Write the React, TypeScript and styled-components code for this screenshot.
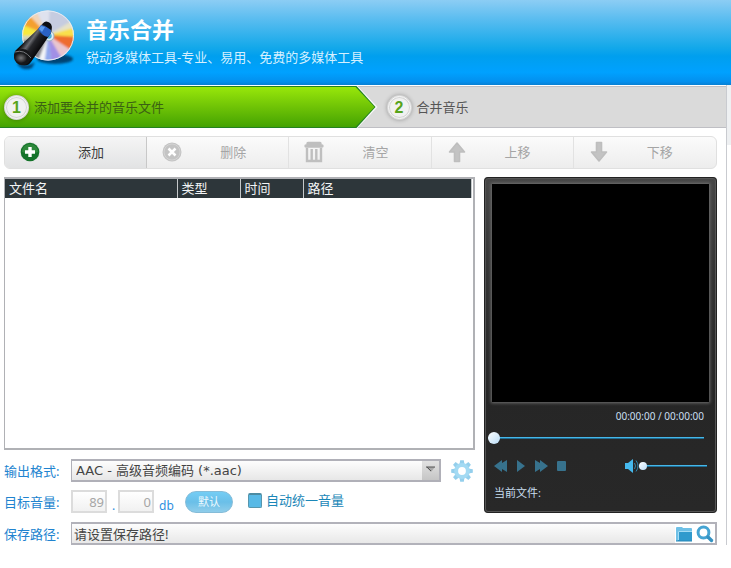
import React from "react";
import styled, { createGlobalStyle } from "styled-components";

const GlobalStyle = createGlobalStyle`
  *, *::before, *::after { box-sizing: border-box; }
  body {
    margin: 0;
    background: #fff;
    font-family: "Noto Sans", "Noto Sans CJK SC", sans-serif;
    font-size: 13px;
    line-height: 18px;
    color: #444;
  }
  button, input, select { font: inherit; color: inherit; margin: 0; padding: 0; border: 0; background: none; border-radius: 0; }
  input, select { min-width: 0; }
  svg { display: block; flex: none; }
`;

const Header = styled.header`
  display: flex;
  gap: 8px;
  height: 85px;
  padding: 8px 10px;
  background: linear-gradient(#8ccdf4 0%, #5bbdf0 22%, #15a9ea 55%, #009fee 66%, #00a1ff 85%, #0390ee 96%, #0780d4 100%);
`;

const Title = styled.h1`
  margin: 7px 0 6px;
  font-size: 22px;
  line-height: 28px;
  font-weight: 700;
  color: #fff;
`;

const Subtitle = styled.p`
  margin: 0;
  line-height: 16px;
  color: #d5f0ff;
  font-size: 13px;
`;

const Body = styled.div`
  display: flex;
  align-items: flex-start;
`;

const Rail = styled.div`
  flex: none;
  width: 4px;
  height: 60px;
  background: #eef0f2;
`;

const Main = styled.main`
  flex: 1;
  min-width: 0;
  padding-top: 1px;
  border-right: 1px solid #c9cbd0;
`;

const Steps = styled.ol`
  display: flex;
  margin: 0;
  padding: 0;
  list-style: none;
  background: #dadada;
  height: 42px;
  box-shadow: inset 0 1px #bfbfc4, inset 0 -1px #bfbfc4;
`;

const ActiveStep = styled.li`
  flex: 0 0 52%;
  padding-right: 2px;
  background: #fafafa;
  clip-path: polygon(0 0, calc(100% - 20px) 0, 100% 50%, calc(100% - 20px) 100%, 0 100%);
`;

const ActiveEdge = styled.div`
  height: 42px;
  padding: 1px 1px 1px 0;
  background: #248222;
  clip-path: polygon(0 0, calc(100% - 19px) 0, 100% 50%, calc(100% - 19px) 100%, 0 100%);
`;

const ActiveFill = styled.div`
  display: flex;
  align-items: center;
  gap: 5px;
  height: 40px;
  padding-left: 4px;
  color: #3b6113;
  background: linear-gradient(#98e70a, #6fc306 50%, #44a302);
  clip-path: polygon(0 0, calc(100% - 19px) 0, 100% 50%, calc(100% - 19px) 100%, 0 100%);
`;

const NextStep = styled.li`
  display: flex;
  align-items: center;
  gap: 5px;
  padding-left: 9px;
  color: #555;
`;

const StepNumber = styled.span`
  width: 25px;
  height: 25px;
  border: 3px solid #d6d6d6;
  border-radius: 50%;
  outline: 1px solid #f8f8f8;
  outline-offset: -2px;
  background: #f1f1f1;
  box-shadow: 0 0 4px rgba(0, 0, 0, 0.3);
  color: #57a31b;
  font: 700 16px/19px "Liberation Sans", sans-serif;
  text-align: center;
`;

const Content = styled.div`
  padding: 8px 9px 0 4px;
`;

const Toolbar = styled.div`
  display: grid;
  grid-template-columns: repeat(5, 1fr);
  height: 33px;
  border: 1px solid #e0e0e0;
  border-radius: 6px;
  overflow: hidden;
  background: linear-gradient(#fbfbfb, #ededed);
`;

const ToolButton = styled.button`
  display: flex;
  align-items: center;
  gap: 37px;
  padding: 0 0 1px 14px;
  color: #3c3c3c;
  text-align: left;
  background: linear-gradient(#f5f5f5, #e2e3e4);
  border-right: 1px solid #c8c8c8;
  &:disabled {
    color: #a5a5a5;
    background: none;
    border-right-color: #e2e2e2;
  }
  &:last-child { border-right: 0; }
`;

const Columns = styled.div`
  display: flex;
  gap: 9px;
  padding: 8px 0 9px;
`;

const LeftColumn = styled.div`
  flex: 1;
  min-width: 0;
`;

const ListPane = styled.div`
  height: 273px;
  border: 2px solid #b0b1b5;
  border-left-width: 1px;
  background: #fff;
  padding-right: 1px;
`;

const FileTable = styled.table`
  width: 100%;
  table-layout: fixed;
  border-collapse: collapse;
`;

const ColumnHead = styled.th<{ $width?: number }>`
  width: ${(p) => (p.$width ? `${p.$width}px` : "auto")};
  height: 19px;
  padding: 0 4px 1px;
  border-right: 1px solid #c4c8ca;
  background: #2d363a;
  color: #f2f4f5;
  font-weight: 400;
  line-height: 18px;
  text-align: left;
`;

const FormRow = styled.div`
  display: flex;
  align-items: center;
  height: 23px;
`;

const FormatRow = styled(FormRow)`
  margin: 9px 0 8px;
`;

const FieldLabel = styled.label`
  flex: none;
  width: 67px;
  color: #2183cf;
`;

const SelectBox = styled.div`
  position: relative;
  flex: 1;
  min-width: 0;
  height: 23px;
  border: 2px solid #b0b0b8;
  border-left-width: 1px;
  background: linear-gradient(#fdfdfd, #e7e7e7);
`;

const Select = styled.select`
  appearance: none;
  display: block;
  width: 100%;
  height: 19px;
  padding-left: 4px;
  color: #444;
  font-family: "DejaVu Sans", "Noto Sans CJK SC", sans-serif;
`;

const SelectArrow = styled.span`
  position: absolute;
  top: 0;
  right: 0;
  display: grid;
  justify-content: center;
  width: 17px;
  height: 19px;
  padding-top: 5px;
  background: linear-gradient(#e2e2e2, #c5c5c5);
  pointer-events: none;
`;

const IconButton = styled.button`
  flex: none;
  display: grid;
  place-items: center;
`;

const SettingsButton = styled(IconButton)`
  width: 24px;
  height: 24px;
  margin: 0 1px 0 9px;
`;

const SearchButton = styled(IconButton)`
  padding: 0 1px 0 3px;
`;

const NumberInput = styled.input`
  width: 36px;
  height: 23px;
  padding-right: 1px;
  border: 2px solid #dcdcdc;
  background: linear-gradient(#fff, #f1f1f1);
  color: #a6a6a6;
  text-align: right;
`;

const Unit = styled.span<{ $wide?: boolean }>`
  width: ${(p) => (p.$wide ? 31 : 11)}px;
  padding: 8px 0 0 5px;
  color: #2f8fe0;
  font-size: 12px;
`;

const DefaultButton = styled.button`
  width: 48px;
  height: 22px;
  border-radius: 11px;
  border: 1px solid #85bcd8;
  background: linear-gradient(#74cdf5, #6abfe8 50%, #8fcdea);
  color: #eefaff;
  font-size: 11px;
  line-height: 18px;
`;

const CheckLabel = styled.label`
  display: flex;
  align-items: center;
  gap: 4px;
  margin-left: 15px;
  padding-bottom: 3px;
  color: #1b87b8;
`;

const CheckBox = styled.input`
  appearance: none;
  width: 14px;
  height: 15px;
  border: 1px solid #5796ad;
  border-top: 2px solid #4c8ba2;
  border-radius: 2px;
  background: #58b9e6;
  &:checked { background: #1e88bd; }
`;

const PathBox = styled.div`
  display: flex;
  flex: 1;
  min-width: 0;
  height: 23px;
  border: 2px solid #b2b2ba;
  border-left-width: 1px;
  background: #fff;
`;

const PathInput = styled.input`
  flex: 1;
  padding-left: 2px;
  background: linear-gradient(#fdfdfd, #e8e8e8);
  color: #444;
`;

const Player = styled.section`
  flex: none;
  width: 233px;
  padding: 5px 6px 0;
  border: 2px solid #555;
  outline: 1px solid #222;
  outline-offset: -1px;
  border-radius: 4px;
  background: linear-gradient(#464646, #333 30%, #262626 65%, #282828);
  color: #c9dff0;
`;

const Screen = styled.div`
  height: 218px;
  background: #000;
  box-shadow: 0 0 3px 1px #707070;
`;

const Time = styled.div`
  margin: 5px 5px 0 0;
  font-size: 10px;
  line-height: 18px;
  text-align: right;
`;

const Range = styled.input<{ $size: number }>`
  appearance: none;
  display: block;
  flex: 1;
  height: 14px;
  &::-webkit-slider-runnable-track {
    height: 2px;
    background: linear-gradient(#46b7e8 50%, #1f6d94 50%);
  }
  &::-webkit-slider-thumb {
    appearance: none;
    width: ${(p) => p.$size}px;
    height: ${(p) => p.$size}px;
    margin-top: ${(p) => 1 - p.$size / 2}px;
    border-radius: 50%;
    background: linear-gradient(135deg, #fff, #b9dcf7);
  }
`;

const SeekBar = styled.div`
  display: flex;
  margin: 6px 5px 0 -4px;
`;

const Controls = styled.div`
  display: flex;
  align-items: center;
  height: 16px;
  margin-top: 13px;
`;

const Transport = styled.div`
  display: flex;
  gap: 8px;
  margin-left: 2px;
`;

const Volume = styled.div`
  display: flex;
  align-items: center;
  width: 82px;
  margin: 0 2px 1px auto;
`;

const CurrentFile = styled.div`
  margin: 10px 0 0 2px;
  font-size: 11px;
  line-height: 18px;
`;

const Logo = () => (
  <svg width="68" height="68" viewBox="0 0 68 68" aria-hidden="true">
    <defs>
      <linearGradient id="barrel" gradientUnits="userSpaceOnUse" x1="18" y1="28" x2="32" y2="38">
        <stop offset="0" stopColor="#0c0c0d" />
        <stop offset=".3" stopColor="#6a6b70" />
        <stop offset=".5" stopColor="#26272b" />
        <stop offset="1" stopColor="#08080a" />
      </linearGradient>
      <radialGradient id="lens">
        <stop offset="0" stopColor="#77787b" />
        <stop offset="1" stopColor="#1b1b1d" />
      </radialGradient>
      <clipPath id="discClip"><ellipse cx="38" cy="27.5" rx="26" ry="25" /></clipPath>
      <filter id="soft" x="-30%" y="-30%" width="160%" height="160%"><feGaussianBlur stdDeviation="1.2" /></filter>
    </defs>
    <ellipse cx="45" cy="51" rx="18" ry="5" fill="#04365e" opacity=".85" filter="url(#soft)" />
    <g clipPath="url(#discClip)">
      <rect x="10" width="56" height="56" fill="#c6cce0" />
      <g filter="url(#soft)">
        <path d="M38 27 6 38 6 24Z" fill="#d5d6b8" />
        <path d="M38 27 6 28 9 15Z" fill="#f7e93c" />
        <path d="M38 27 8 15 18 4Z" fill="#f4a02e" />
        <path d="M38 27 17 5 24-2Z" fill="#f1d5b8" />
        <path d="M38 27 24-2 40-2Z" fill="#dfe2ee" />
        <path d="M38 27 70 8 70 20Z" fill="#e6e2c8" />
        <path d="M38 27 70 18 70 31Z" fill="#f9df4c" />
        <path d="M38 27 70 29 64 46Z" fill="#ee6c2e" />
        <path d="M38 27 64 44 54 56Z" fill="#e9c6cf" />
        <path d="M38 27 54 54 42 58Z" fill="#a18fe6" />
        <path d="M38 27 42 58 34 58Z" fill="#90a8ee" />
        <path d="M38 27 34 58 27 56Z" fill="#f4f6f8" />
        <path d="M38 27 27 56 14 52 6 34Z" fill="#85868c" />
      </g>
    </g>
    <ellipse cx="38" cy="27.5" rx="25.5" ry="24.5" fill="none" stroke="#e6ecf3" />
    <circle cx="39" cy="28" r="5" fill="#e3eef5" stroke="#98b1bd" />
    <circle cx="39" cy="28" r="2.7" fill="#4aaedb" />
    <path d="M9 55Q15 60 25 54L22 60Q13 64 7 56Z" fill="#032f55" opacity=".8" filter="url(#soft)" />
    <path d="M30 19Q34 12 39 15 43 18 41 25L21 54Q17 60 8 56 2 51 5 43Z" fill="url(#barrel)" />
    <path d="M31 17 41 20 41 25 38 29Q32 28 28 21Z" fill="#2a62c4" />
    <path d="m31 18 4 1-3 5-3-3Z" fill="#5e9cec" />
    <path d="M32 17Q35 11 40 15 43 18 41 22L38 20Q35 17 32 17Z" fill="#0d0e12" />
    <ellipse cx="12.5" cy="49" rx="8.5" ry="8" fill="#161719" />
    <ellipse cx="11" cy="50" rx="6" ry="5" fill="url(#lens)" />
    <path d="M5 44Q14 41 21 50" fill="none" stroke="#77797d" />
  </svg>
);

const AddIcon = () => (
  <svg width="22" height="22" viewBox="0 0 22 22" aria-hidden="true">
    <circle cx="11" cy="11" r="10" fill="#dfe3df" />
    <circle cx="11" cy="11" r="9.3" fill="#14732a" />
    <path d="M3 11a8 8 0 0 1 16 0Q11 14 3 11" fill="#3f9748" opacity=".6" />
    <path d="M11 6v10M6 11h10" stroke="#fff" strokeWidth="3.4" />
  </svg>
);

const DeleteIcon = () => (
  <svg width="22" height="22" viewBox="0 0 22 22" aria-hidden="true">
    <circle cx="11" cy="11" r="9.5" fill="#c4c4c4" />
    <circle cx="11" cy="11" r="8" fill="none" stroke="#d4d4d4" />
    <path d="m7.5 7.5 7 7m0-7-7 7" stroke="#fff" strokeWidth="2.5" />
  </svg>
);

const TrashIcon = () => (
  <svg width="22" height="22" viewBox="0 0 22 22" aria-hidden="true">
    <path d="M5 2.5h12M3 5h16" stroke="#bfbfbf" strokeWidth="3.4" strokeLinecap="round" />
    <path d="M4 7v13h14V7M8.7 8v11M13.3 8v11" fill="none" stroke="#bfbfbf" strokeWidth="2.4" />
  </svg>
);

const ArrowIcon = ({ down }: { down?: boolean }) => (
  <svg width="22" height="22" viewBox="0 0 22 22" aria-hidden="true">
    <path
      d={down ? "M8.5 1.5h5V11H18.500l-7.500 9L3.500 11h5Z" : "M8.500 20.500h5V11H18.500L11 2 3.500 11h5Z"}
      fill="#c3c3c3"
      stroke="#bebebe"
      strokeWidth="1.6"
      strokeLinejoin="round"
    />
  </svg>
);

const GearIcon = () => (
  <svg width="22" height="22" viewBox="-11 -11 22 22" aria-hidden="true">
    {[0, 45, 90, 135, 180, 225, 270, 315].map((angle) => (
      <path key={angle} d="m-2.600-6 .8-4.800h3.600l.8 4.800Z" fill="#94cfec" transform={`rotate(${angle})`} />
    ))}
    <circle r="5.900" fill="none" stroke="#a3daf3" strokeWidth="4" />
  </svg>
);

const FolderIcon = () => (
  <svg width="18" height="16" viewBox="0 0 18 16" aria-hidden="true">
    <path d="M1 15V2q0-1 1-1h5l1 1h8q1 0 1 1v12Z" fill="#6fc0e6" />
    <path d="M3 15V6q0-1 1-1h13v10Z" fill="#2f9acd" />
    <path d="M1 15h16" stroke="#2787b8" />
    <path d="M3.500 14V5.500H17" fill="none" stroke="#a4dcf4" />
  </svg>
);

const SearchIcon = () => (
  <svg width="18" height="18" viewBox="0 0 18 18" aria-hidden="true">
    <circle cx="7.5" cy="7.5" r="5.400" fill="#fff" stroke="#45a4d3" strokeWidth="3" />
    <path d="m12 12 3.500 3.500" stroke="#3592c2" strokeWidth="3.400" strokeLinecap="round" />
  </svg>
);

const transport = [
  { label: "后退", width: 14, path: "M0 6 8 0v3l5-3v12L8 9v3Z" },
  { label: "播放", width: 10, path: "M1 0 9 6 1 12Z" },
  { label: "前进", width: 14, path: "M1 0 6 3V0l8 6-8 6V9l-5 3Z" },
  { label: "停止", width: 11, path: "M2 1h7q1 0 1 1v8q0 1-1 1H2q-1 0-1-1V2q0-1 1-1Z" },
];

const SpeakerIcon = () => (
  <svg width="14" height="14" viewBox="0 0 14 14" aria-hidden="true">
    <path d="M0 4h3l5-4v14L3 10H0Z" fill="#46b9ed" />
    <path d="M9.500 4q2 3 0 6m1.500-8.500q4 5.500 0 11" fill="none" stroke="#2e86ae" />
  </svg>
);

const tools = [
  { label: "添加", icon: <AddIcon />, enabled: true },
  { label: "删除", icon: <DeleteIcon /> },
  { label: "清空", icon: <TrashIcon /> },
  { label: "上移", icon: <ArrowIcon /> },
  { label: "下移", icon: <ArrowIcon down /> },
];

export default function App() {
  return (
    <>
      <GlobalStyle />
      <Header>
        <Logo />
        <div>
          <Title>音乐合并</Title>
          <Subtitle>锐动多媒体工具-专业、易用、免费的多媒体工具</Subtitle>
        </div>
      </Header>
      <Body>
        <Main>
          <Steps>
            <ActiveStep aria-current="step">
              <ActiveEdge>
                <ActiveFill>
                  <StepNumber>1</StepNumber>
                  添加要合并的音乐文件
                </ActiveFill>
              </ActiveEdge>
            </ActiveStep>
            <NextStep>
              <StepNumber>2</StepNumber>
              合并音乐
            </NextStep>
          </Steps>
          <Content>
            <Toolbar>
              {tools.map((tool) => (
                <ToolButton key={tool.label} type="button" disabled={!tool.enabled}>
                  {tool.icon}
                  {tool.label}
                </ToolButton>
              ))}
            </Toolbar>
            <Columns>
              <LeftColumn>
                <ListPane>
                  <FileTable>
                    <thead>
                      <tr>
                        <ColumnHead $width={172}>文件名</ColumnHead>
                        <ColumnHead $width={63}>类型</ColumnHead>
                        <ColumnHead $width={63}>时间</ColumnHead>
                        <ColumnHead>路径</ColumnHead>
                      </tr>
                    </thead>
                    <tbody />
                  </FileTable>
                </ListPane>
                <FormatRow>
                  <FieldLabel htmlFor="format">输出格式:</FieldLabel>
                  <SelectBox>
                    <Select id="format">
                      <option>AAC - 高级音频编码 (*.aac)</option>
                    </Select>
                    <SelectArrow>
                      <svg width="9" height="7" viewBox="0 0 9 7" aria-hidden="true">
                        <path d="M0 1h9L5 6Z" fill="#a9a9a9" />
                        <path d="M0 1h9M1 1l4 4" stroke="#555" />
                      </svg>
                    </SelectArrow>
                  </SelectBox>
                  <SettingsButton type="button" aria-label="设置">
                    <GearIcon />
                  </SettingsButton>
                </FormatRow>
                <FormRow>
                  <FieldLabel htmlFor="volume-whole">目标音量:</FieldLabel>
                  <NumberInput id="volume-whole" defaultValue="89" disabled />
                  <Unit>.</Unit>
                  <NumberInput aria-label="目标音量小数" defaultValue="0" disabled />
                  <Unit $wide>db</Unit>
                  <DefaultButton type="button">默认</DefaultButton>
                  <CheckLabel>
                    <CheckBox type="checkbox" />
                    自动统一音量
                  </CheckLabel>
                </FormRow>
              </LeftColumn>
              <Player>
                <Screen />
                <Time>00:00:00 / 00:00:00</Time>
                <SeekBar>
                  <Range $size={12} type="range" aria-label="播放进度" defaultValue={0} />
                </SeekBar>
                <Controls>
                  <Transport>
                    {transport.map((item) => (
                      <IconButton key={item.label} type="button" aria-label={item.label}>
                        <svg width={item.width} height="12" viewBox={`0 0 ${item.width} 12`}>
                          <path d={item.path} fill="#37728d" />
                        </svg>
                      </IconButton>
                    ))}
                  </Transport>
                  <Volume>
                    <SpeakerIcon />
                    <Range $size={8} type="range" aria-label="音量" defaultValue={0} />
                  </Volume>
                </Controls>
                <CurrentFile>当前文件:</CurrentFile>
              </Player>
            </Columns>
            <FormRow>
              <FieldLabel htmlFor="path">保存路径:</FieldLabel>
              <PathBox>
                <PathInput id="path" defaultValue="请设置保存路径!" />
                <IconButton type="button" aria-label="打开文件夹">
                  <FolderIcon />
                </IconButton>
                <SearchButton type="button" aria-label="浏览">
                  <SearchIcon />
                </SearchButton>
              </PathBox>
            </FormRow>
          </Content>
        </Main>
        <Rail />
      </Body>
    </>
  );
}
